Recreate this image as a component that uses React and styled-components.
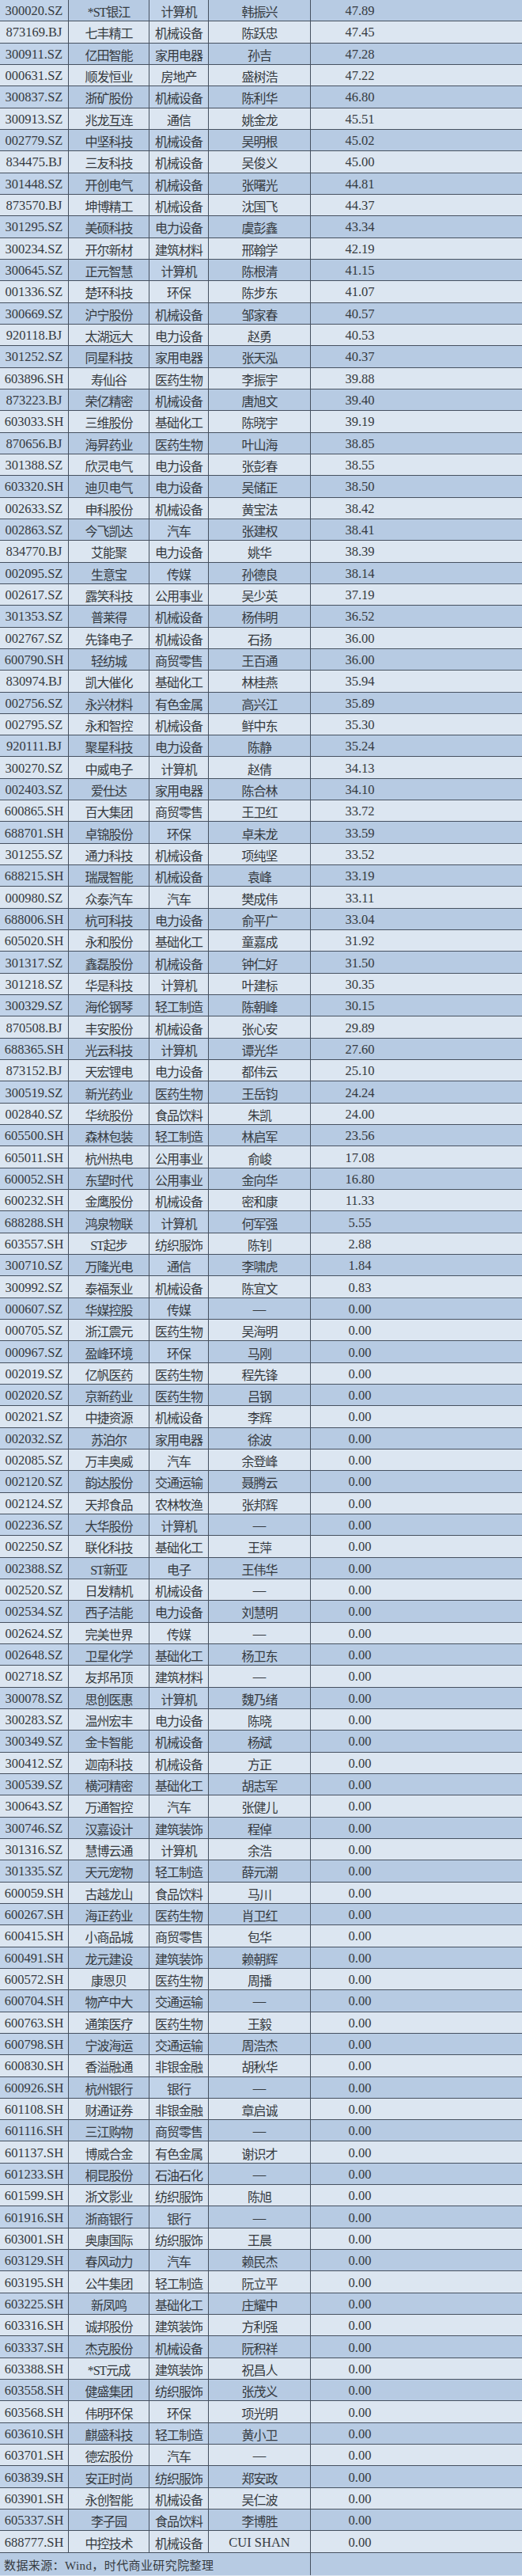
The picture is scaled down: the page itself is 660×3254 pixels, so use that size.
import React from 'react';
import styled, { createGlobalStyle } from 'styled-components';

const GlobalStyle = createGlobalStyle`
    html, body {
        margin: 0;
        padding: 0;
        background: #dce6f1;
    }
`

const rows = [
    ['300020.SZ', '*ST银江', '计算机', '韩振兴', '47.89'],
    ['873169.BJ', '七丰精工', '机械设备', '陈跃忠', '47.45'],
    ['300911.SZ', '亿田智能', '家用电器', '孙吉', '47.28'],
    ['000631.SZ', '顺发恒业', '房地产', '盛树浩', '47.22'],
    ['300837.SZ', '浙矿股份', '机械设备', '陈利华', '46.80'],
    ['300913.SZ', '兆龙互连', '通信', '姚金龙', '45.51'],
    ['002779.SZ', '中坚科技', '机械设备', '吴明根', '45.02'],
    ['834475.BJ', '三友科技', '机械设备', '吴俊义', '45.00'],
    ['301448.SZ', '开创电气', '机械设备', '张曙光', '44.81'],
    ['873570.BJ', '坤博精工', '机械设备', '沈国飞', '44.37'],
    ['301295.SZ', '美硕科技', '电力设备', '虞彭鑫', '43.34'],
    ['300234.SZ', '开尔新材', '建筑材料', '邢翰学', '42.19'],
    ['300645.SZ', '正元智慧', '计算机', '陈根清', '41.15'],
    ['001336.SZ', '楚环科技', '环保', '陈步东', '41.07'],
    ['300669.SZ', '沪宁股份', '机械设备', '邹家春', '40.57'],
    ['920118.BJ', '太湖远大', '电力设备', '赵勇', '40.53'],
    ['301252.SZ', '同星科技', '家用电器', '张天泓', '40.37'],
    ['603896.SH', '寿仙谷', '医药生物', '李振宇', '39.88'],
    ['873223.BJ', '荣亿精密', '机械设备', '唐旭文', '39.40'],
    ['603033.SH', '三维股份', '基础化工', '陈晓宇', '39.19'],
    ['870656.BJ', '海昇药业', '医药生物', '叶山海', '38.85'],
    ['301388.SZ', '欣灵电气', '电力设备', '张彭春', '38.55'],
    ['603320.SH', '迪贝电气', '电力设备', '吴储正', '38.50'],
    ['002633.SZ', '申科股份', '机械设备', '黄宝法', '38.42'],
    ['002863.SZ', '今飞凯达', '汽车', '张建权', '38.41'],
    ['834770.BJ', '艾能聚', '电力设备', '姚华', '38.39'],
    ['002095.SZ', '生意宝', '传媒', '孙德良', '38.14'],
    ['002617.SZ', '露笑科技', '公用事业', '吴少英', '37.19'],
    ['301353.SZ', '普莱得', '机械设备', '杨伟明', '36.52'],
    ['002767.SZ', '先锋电子', '机械设备', '石扬', '36.00'],
    ['600790.SH', '轻纺城', '商贸零售', '王百通', '36.00'],
    ['830974.BJ', '凯大催化', '基础化工', '林桂燕', '35.94'],
    ['002756.SZ', '永兴材料', '有色金属', '高兴江', '35.89'],
    ['002795.SZ', '永和智控', '机械设备', '鲜中东', '35.30'],
    ['920111.BJ', '聚星科技', '电力设备', '陈静', '35.24'],
    ['300270.SZ', '中威电子', '计算机', '赵倩', '34.13'],
    ['002403.SZ', '爱仕达', '家用电器', '陈合林', '34.10'],
    ['600865.SH', '百大集团', '商贸零售', '王卫红', '33.72'],
    ['688701.SH', '卓锦股份', '环保', '卓未龙', '33.59'],
    ['301255.SZ', '通力科技', '机械设备', '项纯坚', '33.52'],
    ['688215.SH', '瑞晟智能', '机械设备', '袁峰', '33.19'],
    ['000980.SZ', '众泰汽车', '汽车', '樊成伟', '33.11'],
    ['688006.SH', '杭可科技', '电力设备', '俞平广', '33.04'],
    ['605020.SH', '永和股份', '基础化工', '童嘉成', '31.92'],
    ['301317.SZ', '鑫磊股份', '机械设备', '钟仁好', '31.50'],
    ['301218.SZ', '华是科技', '计算机', '叶建标', '30.35'],
    ['300329.SZ', '海伦钢琴', '轻工制造', '陈朝峰', '30.15'],
    ['870508.BJ', '丰安股份', '机械设备', '张心安', '29.89'],
    ['688365.SH', '光云科技', '计算机', '谭光华', '27.60'],
    ['873152.BJ', '天宏锂电', '电力设备', '都伟云', '25.10'],
    ['300519.SZ', '新光药业', '医药生物', '王岳钧', '24.24'],
    ['002840.SZ', '华统股份', '食品饮料', '朱凯', '24.00'],
    ['605500.SH', '森林包装', '轻工制造', '林启军', '23.56'],
    ['605011.SH', '杭州热电', '公用事业', '俞峻', '17.08'],
    ['600052.SH', '东望时代', '公用事业', '金向华', '16.80'],
    ['600232.SH', '金鹰股份', '机械设备', '密和康', '11.33'],
    ['688288.SH', '鸿泉物联', '计算机', '何军强', '5.55'],
    ['603557.SH', 'ST起步', '纺织服饰', '陈钊', '2.88'],
    ['300710.SZ', '万隆光电', '通信', '李啸虎', '1.84'],
    ['300992.SZ', '泰福泵业', '机械设备', '陈宜文', '0.83'],
    ['000607.SZ', '华媒控股', '传媒', '—', '0.00'],
    ['000705.SZ', '浙江震元', '医药生物', '吴海明', '0.00'],
    ['000967.SZ', '盈峰环境', '环保', '马刚', '0.00'],
    ['002019.SZ', '亿帆医药', '医药生物', '程先锋', '0.00'],
    ['002020.SZ', '京新药业', '医药生物', '吕钢', '0.00'],
    ['002021.SZ', '中捷资源', '机械设备', '李辉', '0.00'],
    ['002032.SZ', '苏泊尔', '家用电器', '徐波', '0.00'],
    ['002085.SZ', '万丰奥威', '汽车', '余登峰', '0.00'],
    ['002120.SZ', '韵达股份', '交通运输', '聂腾云', '0.00'],
    ['002124.SZ', '天邦食品', '农林牧渔', '张邦辉', '0.00'],
    ['002236.SZ', '大华股份', '计算机', '—', '0.00'],
    ['002250.SZ', '联化科技', '基础化工', '王萍', '0.00'],
    ['002388.SZ', 'ST新亚', '电子', '王伟华', '0.00'],
    ['002520.SZ', '日发精机', '机械设备', '—', '0.00'],
    ['002534.SZ', '西子洁能', '电力设备', '刘慧明', '0.00'],
    ['002624.SZ', '完美世界', '传媒', '—', '0.00'],
    ['002648.SZ', '卫星化学', '基础化工', '杨卫东', '0.00'],
    ['002718.SZ', '友邦吊顶', '建筑材料', '—', '0.00'],
    ['300078.SZ', '思创医惠', '计算机', '魏乃绪', '0.00'],
    ['300283.SZ', '温州宏丰', '电力设备', '陈晓', '0.00'],
    ['300349.SZ', '金卡智能', '机械设备', '杨斌', '0.00'],
    ['300412.SZ', '迦南科技', '机械设备', '方正', '0.00'],
    ['300539.SZ', '横河精密', '基础化工', '胡志军', '0.00'],
    ['300643.SZ', '万通智控', '汽车', '张健儿', '0.00'],
    ['300746.SZ', '汉嘉设计', '建筑装饰', '程倬', '0.00'],
    ['301316.SZ', '慧博云通', '计算机', '余浩', '0.00'],
    ['301335.SZ', '天元宠物', '轻工制造', '薛元潮', '0.00'],
    ['600059.SH', '古越龙山', '食品饮料', '马川', '0.00'],
    ['600267.SH', '海正药业', '医药生物', '肖卫红', '0.00'],
    ['600415.SH', '小商品城', '商贸零售', '包华', '0.00'],
    ['600491.SH', '龙元建设', '建筑装饰', '赖朝辉', '0.00'],
    ['600572.SH', '康恩贝', '医药生物', '周播', '0.00'],
    ['600704.SH', '物产中大', '交通运输', '—', '0.00'],
    ['600763.SH', '通策医疗', '医药生物', '王毅', '0.00'],
    ['600798.SH', '宁波海运', '交通运输', '周浩杰', '0.00'],
    ['600830.SH', '香溢融通', '非银金融', '胡秋华', '0.00'],
    ['600926.SH', '杭州银行', '银行', '—', '0.00'],
    ['601108.SH', '财通证券', '非银金融', '章启诚', '0.00'],
    ['601116.SH', '三江购物', '商贸零售', '—', '0.00'],
    ['601137.SH', '博威合金', '有色金属', '谢识才', '0.00'],
    ['601233.SH', '桐昆股份', '石油石化', '—', '0.00'],
    ['601599.SH', '浙文影业', '纺织服饰', '陈旭', '0.00'],
    ['601916.SH', '浙商银行', '银行', '—', '0.00'],
    ['603001.SH', '奥康国际', '纺织服饰', '王晨', '0.00'],
    ['603129.SH', '春风动力', '汽车', '赖民杰', '0.00'],
    ['603195.SH', '公牛集团', '轻工制造', '阮立平', '0.00'],
    ['603225.SH', '新凤鸣', '基础化工', '庄耀中', '0.00'],
    ['603316.SH', '诚邦股份', '建筑装饰', '方利强', '0.00'],
    ['603337.SH', '杰克股份', '机械设备', '阮积祥', '0.00'],
    ['603388.SH', '*ST元成', '建筑装饰', '祝昌人', '0.00'],
    ['603558.SH', '健盛集团', '纺织服饰', '张茂义', '0.00'],
    ['603568.SH', '伟明环保', '环保', '项光明', '0.00'],
    ['603610.SH', '麒盛科技', '轻工制造', '黄小卫', '0.00'],
    ['603701.SH', '德宏股份', '汽车', '—', '0.00'],
    ['603839.SH', '安正时尚', '纺织服饰', '郑安政', '0.00'],
    ['603901.SH', '永创智能', '机械设备', '吴仁波', '0.00'],
    ['605337.SH', '李子园', '食品饮料', '李博胜', '0.00'],
    ['688777.SH', '中控技术', '机械设备', 'CUI SHAN', '0.00'],
]

const Table = styled.div`
    width: 660px;
    font-family: "Liberation Serif", "Noto Sans CJK SC", serif;
    color: #353a40;
`

const Row = styled.div`
    display: grid;
    grid-template-columns: 87px 102px 75px 129px 1fr;
    height: 27.34px;
    box-sizing: border-box;
    border-bottom: 1px solid #465160;
    background: ${p => (p.$dark ? '#b7cbe3' : '#dce6f1')};
`

// on the darker rows the 1st and 3rd columns are a touch lighter
const Cell = styled.div`
    display: flex;
    align-items: center;
    justify-content: center;
    border-right: 1px solid #465160;
    white-space: nowrap;
    overflow: hidden;
    font-size: ${p => (p.$latin ? '16.5px' : '16px')};
    letter-spacing: ${p => (p.$latin ? '0' : '-1px')};
    padding-top: 2px;
    background: ${p => (p.$soft ? '#c1d3e9' : 'transparent')};
`

const Value = styled.div`
    display: flex;
    align-items: center;
    justify-content: center;
    padding: 2px 143px 0 0;
    font-size: 16.5px;
`

const Footer = styled.div`
    display: grid;
    grid-template-columns: 393px 1fr;
    height: 28px;
    background: #b7cbe3;
`

const Note = styled.div`
    display: flex;
    align-items: center;
    padding: 1px 0 0 5px;
    border-right: 1px solid #465160;
    font-size: 15px;
    letter-spacing: 0.4px;
`

export default function App() {
    return (
        <>
            <GlobalStyle />
            <Table>
                {rows.map((r, i) => {
                    const dark = i % 2 === 0;
                    return (
                        <Row key={r[0]} $dark={dark}>
                            <Cell $latin $soft={dark}>{r[0]}</Cell>
                            <Cell>{r[1]}</Cell>
                            <Cell $soft={dark}>{r[2]}</Cell>
                            <Cell $latin={r[3] === 'CUI SHAN' || r[3] === '—'}>{r[3]}</Cell>
                            <Value>{r[4]}</Value>
                        </Row>
                    );
                })}
                <Footer>
                    <Note>数据来源：Wind，时代商业研究院整理</Note>
                    <div />
                </Footer>
            </Table>
        </>
    );
}
